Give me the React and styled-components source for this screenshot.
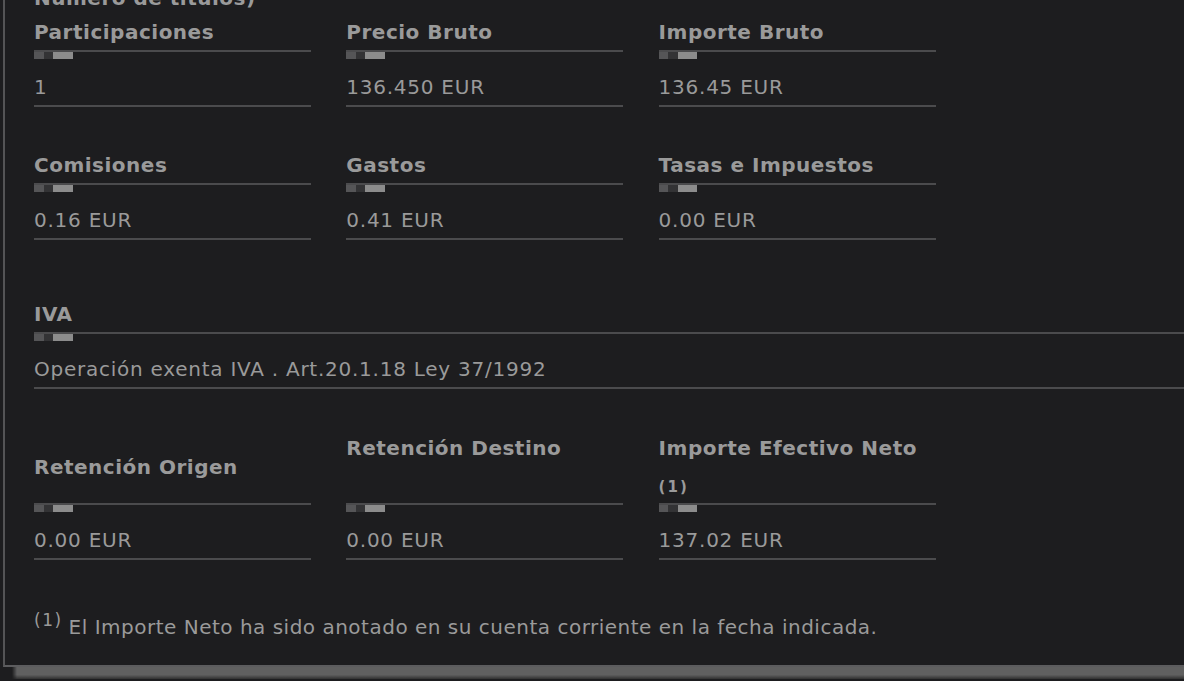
import React from "react";
import styled, { createGlobalStyle } from "styled-components";

const GlobalStyle = createGlobalStyle`
  html, body {
    margin: 0;
    padding: 0;
    background: #1d1d1f;
    overflow: hidden;
    font-family: "DejaVu Sans", Verdana, sans-serif;
  }
`;

const Page = styled.div`
  padding-left: 3px;
  width: 1500px;
`;

const Panel = styled.section`
  width: 1400px;
  border-left: 2px solid #545456;
  border-bottom: 2px solid #5c5c5e;
  padding: 0 0 26px 29px;
  color: #9a9a9a;
`;

const ShadowBar = styled.div`
  margin-left: 9px;
  width: 1400px;
  height: 12px;
  background: linear-gradient(to bottom, #606060 0, #606060 65%, #303030 100%);
  -webkit-mask-image: linear-gradient(to right, transparent 0, #000 5px);
  mask-image: linear-gradient(to right, transparent 0, #000 5px);
`;

const CutHeading = styled.div`
  margin-top: -14px;
  font-size: 20px;
  line-height: 24px;
  font-weight: bold;
  letter-spacing: 0.5px;
  white-space: nowrap;
`;

const Row = styled.div`
  display: grid;
  grid-template-columns: ${(p) => (p.$full ? "1fr" : "repeat(3, 277px)")};
  column-gap: 35.3px;
  margin-top: ${(p) => p.$top}px;
`;

const Field = styled.div`
  display: flex;
  flex-direction: column;
`;

const LabelArea = styled.div`
  flex: 1;
  display: flex;
  flex-direction: column;
  justify-content: ${(p) => (p.$center ? "center" : "flex-start")};
  padding-bottom: 6px;
  border-bottom: 2px solid #4b4b4d;
`;

const LabelText = styled.div`
  font-size: 20px;
  line-height: 24px;
  font-weight: bold;
  letter-spacing: 0.5px;
  white-space: nowrap;
`;

const LabelNote = styled.div`
  margin-top: 17px;
  font-size: 15px;
  line-height: 20px;
  font-weight: bold;
  letter-spacing: 2px;
`;

const Marker = styled.div`
  display: flex;
  height: 7px;
`;

const MarkerBlock = styled.span`
  display: block;
  width: ${(p) => p.$w}px;
  background: ${(p) => p.$c};
`;

const Value = styled.div`
  margin-top: 16px;
  padding-bottom: 6px;
  border-bottom: 2px solid #4b4b4d;
  font-size: 20px;
  line-height: 24px;
  letter-spacing: 0.75px;
  white-space: nowrap;
`;

const Footnote = styled.p`
  margin: 55px 0 0 0;
  font-size: 20px;
  line-height: 24px;
  letter-spacing: 0.5px;
  white-space: nowrap;
`;

const Sup = styled.sup`
  font-size: 17px;
  line-height: 0;
  vertical-align: 8px;
  letter-spacing: 1.5px;
  margin-right: 6px;
`;

function DataField({ label, note, value, center }) {
  return (
    <Field>
      <LabelArea $center={center}>
        <LabelText>{label}</LabelText>
        {note && <LabelNote>{note}</LabelNote>}
      </LabelArea>
      <Marker>
        <MarkerBlock $w={9.5} $c="#555557" />
        <MarkerBlock $w={9.5} $c="#333335" />
        <MarkerBlock $w={19.5} $c="#8c8c8c" />
      </Marker>
      <Value>{value}</Value>
    </Field>
  );
}

export default function App() {
  return (
    <>
      <GlobalStyle />
      <Page>
        <Panel>
          <CutHeading>Número de títulos)</CutHeading>
          <Row $top={10}>
            <DataField label="Participaciones" value="1" />
            <DataField label="Precio Bruto" value="136.450 EUR" />
            <DataField label="Importe Bruto" value="136.45 EUR" />
          </Row>
          <Row $top={46}>
            <DataField label="Comisiones" value="0.16 EUR" />
            <DataField label="Gastos" value="0.41 EUR" />
            <DataField label="Tasas e Impuestos" value="0.00 EUR" />
          </Row>
          <Row $top={62} $full>
            <DataField
              label="IVA"
              value="Operación exenta IVA . Art.20.1.18 Ley 37/1992"
            />
          </Row>
          <Row $top={47}>
            <DataField center label="Retención Origen" value="0.00 EUR" />
            <DataField label="Retención Destino" value="0.00 EUR" />
            <DataField
              label="Importe Efectivo Neto"
              note="(1)"
              value="137.02 EUR"
            />
          </Row>
          <Footnote>
            <Sup>(1)</Sup>El Importe Neto ha sido anotado en su cuenta corriente
            en la fecha indicada.
          </Footnote>
        </Panel>
        <ShadowBar />
      </Page>
    </>
  );
}
